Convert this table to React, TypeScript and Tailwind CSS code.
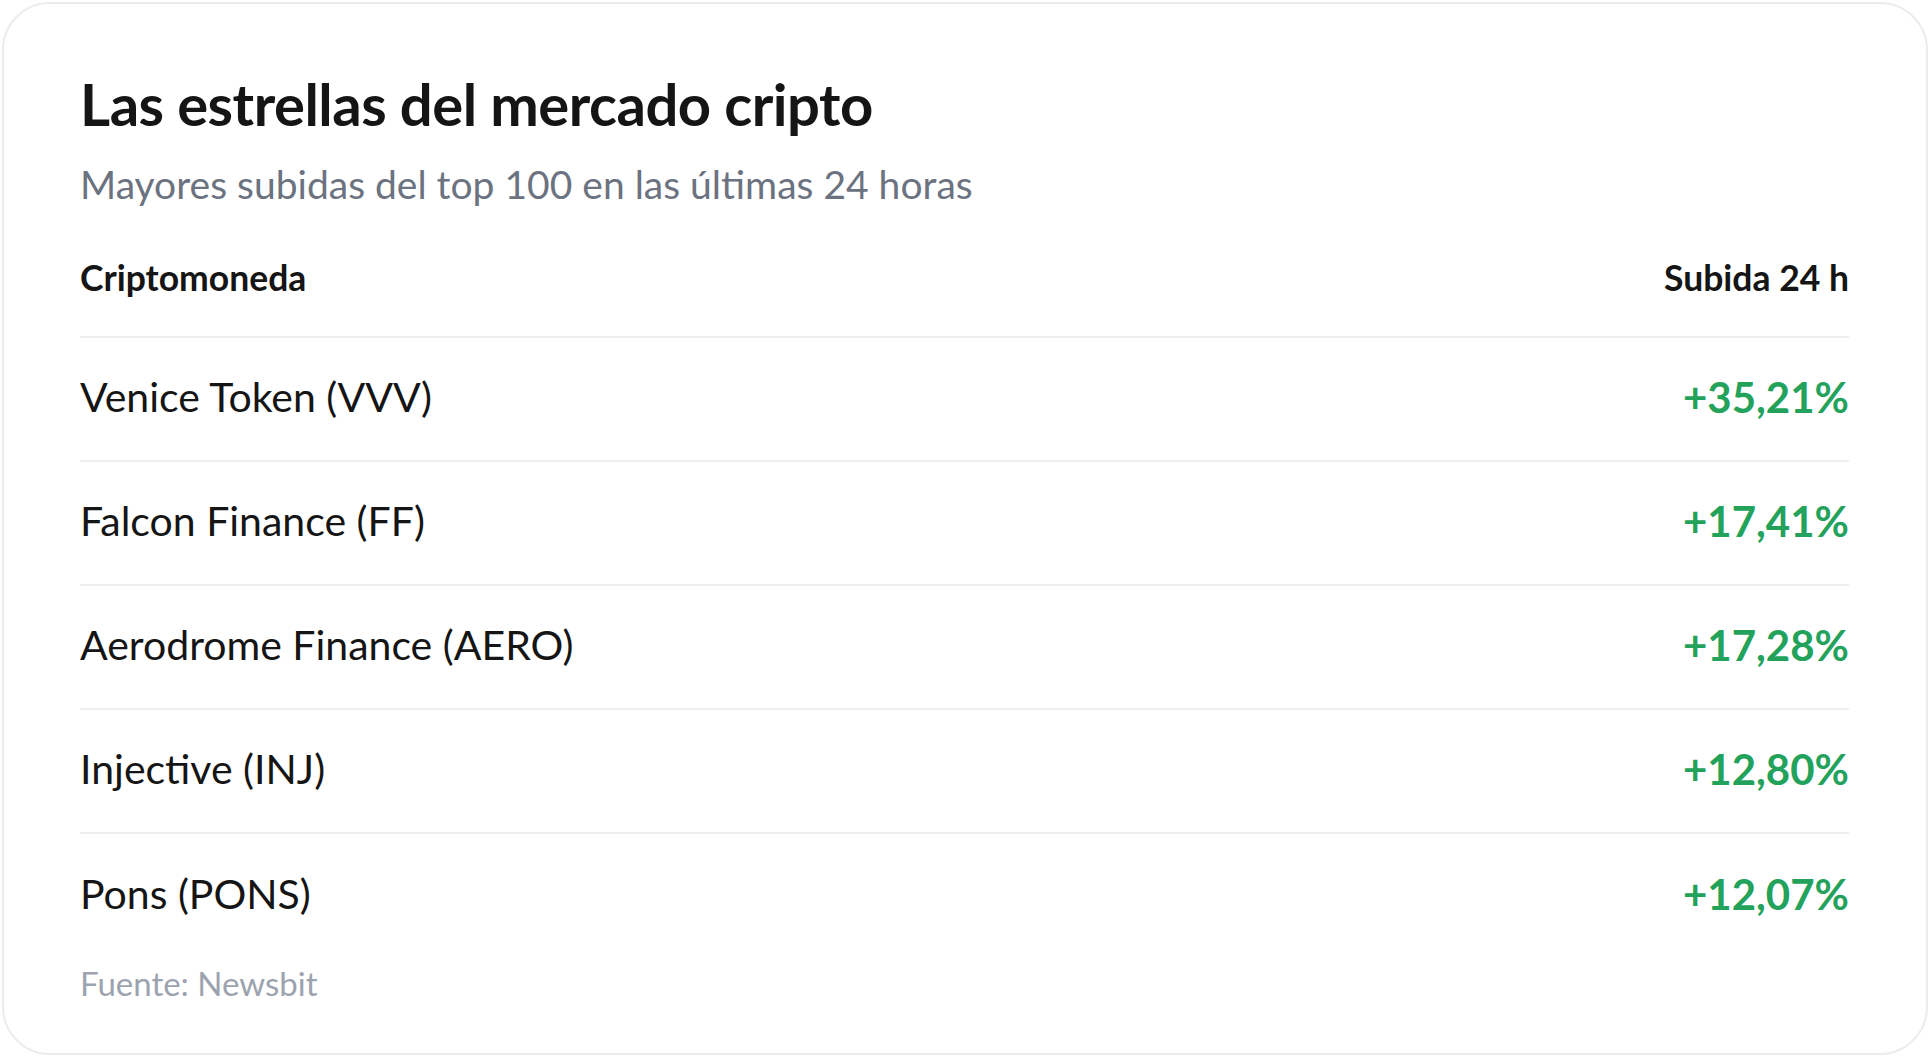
const rows = [
  { name: 'Venice Token (VVV)', change: '+35,21%' },
  { name: 'Falcon Finance (FF)', change: '+17,41%' },
  { name: 'Aerodrome Finance (AERO)', change: '+17,28%' },
  { name: 'Injective (INJ)', change: '+12,80%' },
  { name: 'Pons (PONS)', change: '+12,07%' },
];

export default function App() {
  return (
    <div className="w-[1930px] h-[1059px] bg-white p-[2px] font-['Lato','Liberation_Sans',sans-serif]">
      <div className="h-[1053px] w-[1926px] rounded-[48px] border-2 border-[#ececee] bg-white pl-[76px] pr-[77px] pt-[64px]">
        <h1 className="text-[58px] font-bold leading-[72px] tracking-[-0.5px] text-[#151515]">
          Las estrellas del mercado cripto
        </h1>
        <p className="mt-[21px] text-[39px] leading-[46px] text-[#6b7280]">
          Mayores subidas del top 100 en las últimas 24 horas
        </p>

        <div className="mt-[49px] flex items-center justify-between border-b-2 border-[#eeeef0] pb-[36px] text-[35.5px] font-bold leading-[44px] text-[#151515]">
          <span>Criptomoneda</span>
          <span>Subida 24 h</span>
        </div>

        {rows.map((r, i) => (
          <div
            key={r.name}
            className={
              'flex h-[124px] items-center justify-between pb-[4px] ' +
              (i < rows.length - 1 ? 'border-b-2 border-[#eeeef0]' : '')
            }
          >
            <span className="text-[41px] text-[#151515]">{r.name}</span>
            <span className="text-[42px] font-bold text-[#23a25b]">{r.change}</span>
          </div>
        ))}

        <p className="mt-[5px] text-[33px] leading-[40px] text-[#9ca3af]">Fuente: Newsbit</p>
      </div>
    </div>
  );
}
